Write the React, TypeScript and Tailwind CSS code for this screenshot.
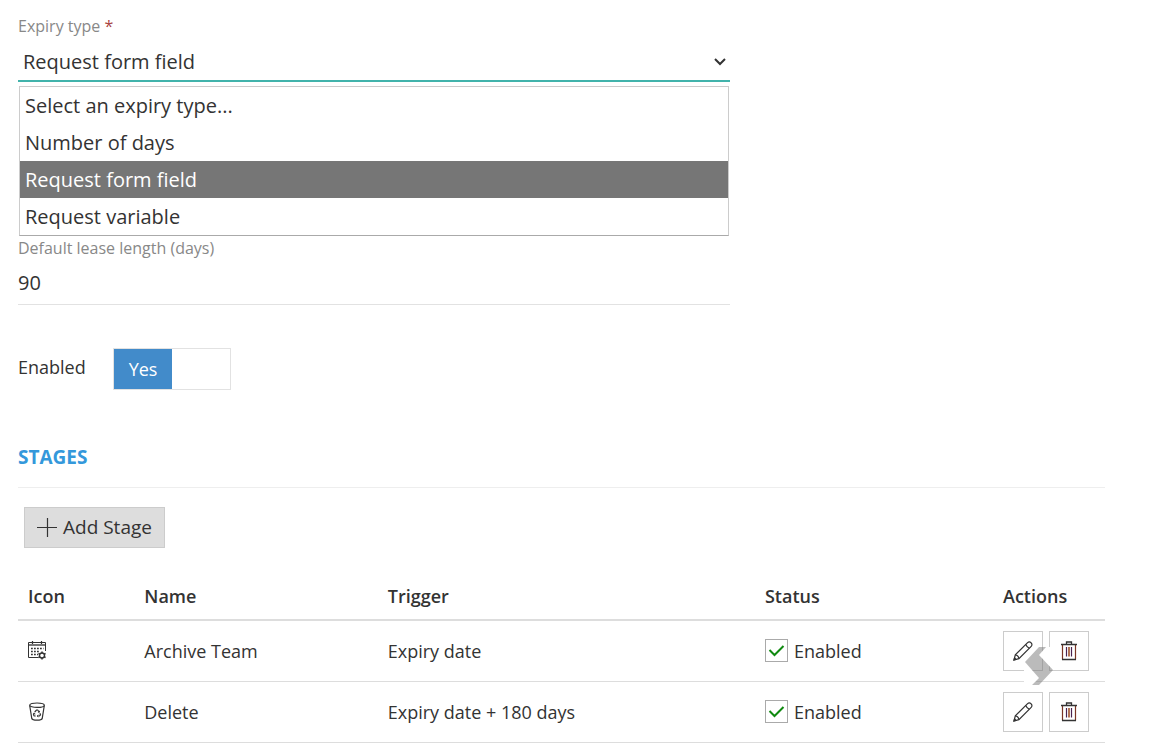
import React, { useState } from "react";

const expiryTypes = [
  "Select an expiry type...",
  "Number of days",
  "Request form field",
  "Request variable",
];

const stages = [
  { name: "Archive Team", trigger: "Expiry date", icon: "calendar" },
  { name: "Delete", trigger: "Expiry date + 180 days", icon: "bin" },
];

function CalendarGearIcon() {
  return (
    <svg width="20" height="20" viewBox="0 0 20 20" fill="none" stroke="#333" aria-hidden="true">
      <path d="M10.5 16.5H0.5V1.5H17.5V10" />
      <path d="M1 4H17" stroke="#777" strokeWidth="2" />
      <path d="M4.5 0V3M13.5 0V3" strokeWidth="1.2" />
      <path d="M3 7.5H15.5M3 10.5H12M3 13.5H10" strokeWidth="1.3" strokeDasharray="1.8 1.2" />
      <circle cx="14" cy="14.5" r="2.5" strokeWidth="1.4" />
      <path d="M14 10.5V12M14 17V18.5M10.4 12.5L11.8 13.2M16.2 15.8L17.6 16.5M10.4 16.5L11.8 15.8M16.2 13.2L17.6 12.5" strokeWidth="1.5" />
    </svg>
  );
}

function RecycleBinIcon() {
  return (
    <svg width="20" height="20" viewBox="0 0 20 20" fill="none" stroke="#333" aria-hidden="true">
      <ellipse cx="9" cy="3.2" rx="7.3" ry="2.2" strokeWidth="1.2" />
      <path d="M1.7 3.5L3.8 16.5C4.5 18.7 13.5 18.7 14.2 16.5L16.3 3.5" strokeWidth="1.2" />
      <path d="M6.7 10L8.5 8H9.7L11.1 10M11.9 11.2L12.5 12.8L11.5 14H9.5M7.7 14H6.2L5.5 12.7L6.3 11.3" strokeWidth="1.2" />
      <path d="M9.9 10.2H11.5V8.8M10.3 12.8L9.2 14L10.3 15.2M5.2 11.5L6.5 11.1L7 12.4" strokeWidth="0.9" />
    </svg>
  );
}

function PencilIcon() {
  return (
    <svg width="20" height="20" viewBox="0 0 20 20" fill="none" stroke="#333" strokeWidth="1.2" aria-hidden="true">
      <path d="M1 19L2.3 13.9L14.6 1.6C15.6 0.6 17 0.7 18 1.7C19.2 2.8 19.2 4.3 18.2 5.3L5.9 17.6Z" />
      <path d="M2.3 13.9C4.2 14.2 5.8 15.8 5.9 17.6M12.7 3.5C13.4 5.1 14.7 6.4 16.3 7.2" />
      <path d="M1 19L1.6 16.9L3.1 18.4Z" fill="#333" />
    </svg>
  );
}

function TrashIcon() {
  return (
    <svg width="20" height="20" viewBox="0 0 20 20" fill="none" aria-hidden="true">
      <path d="M3.5 4V18.5M16.5 18.5V4" stroke="#7a3524" strokeWidth="1.2" />
      <path d="M2 3.5H18M7.5 3V1H12.5V3M3 18.5H17" stroke="#333" strokeWidth="1.3" />
      <path d="M7.5 6V15.5" stroke="#4a2350" strokeWidth="1.2" />
      <path d="M10 6V15.5" stroke="#a0522d" strokeWidth="1.6" />
      <path d="M12.5 6V15.5" stroke="#4a2350" strokeWidth="1.2" />
    </svg>
  );
}

function RibbonMark() {
  return (
    <svg
      width="30"
      height="39"
      viewBox="0 0 30 39"
      className="pointer-events-none absolute top-[26px] left-[31px]"
      aria-hidden="true"
    >
      <path d="M22 0H30V23H29L15 8ZM0 15H1L15 31L8 39H0Z" fill="#fff" />
      <path d="M15 0H22L15 8L29 23L15 38H8L15 31L1 15Z" fill="#777" fillOpacity="0.5" />
    </svg>
  );
}

export default function App() {
  const [expiry, setExpiry] = useState("Request form field");
  const [open, setOpen] = useState(true);
  const [enabled, setEnabled] = useState(true);

  return (
    <main className="bg-white pt-3 pr-[62px] pb-3 pl-[18px] font-['Open_Sans','Noto_Sans',sans-serif] text-lg text-[#333]">
      <form className="max-w-[712px]" onSubmit={(e) => e.preventDefault()}>
        <div className="relative">
          <label htmlFor="expiry" className="block text-base leading-7 text-[#888]">
            Expiry type <span className="text-[#a94442]">*</span>
          </label>
          <div className="relative">
            <select
              id="expiry"
              value={expiry}
              onChange={(e) => setExpiry(e.target.value)}
              onClick={() => setOpen(!open)}
              className="block h-[42px] w-full appearance-none border-b-2 border-[#42b3ab] bg-transparent pt-1 pr-6 pl-[5px] text-xl outline-none"
            >
              {expiryTypes.map((type) => (
                <option key={type}>{type}</option>
              ))}
            </select>
            <svg width="12" height="8" viewBox="0 0 12 8" fill="none" className="pointer-events-none absolute top-[18px] right-1" aria-hidden="true">
              <path d="M1 1L6 6L11 1" stroke="#333" strokeWidth="2" />
            </svg>
          </div>
          {open && (
            <ul role="listbox" aria-label="Expiry type" className="absolute top-full right-px left-px z-10 mt-1 border border-[#ccc] border-b-[#aaa] bg-white text-xl">
              {expiryTypes.map((type) => (
                <li
                  key={type}
                  role="option"
                  aria-selected={type === expiry}
                  onClick={() => {
                    setExpiry(type);
                    setOpen(false);
                  }}
                  className="h-[37px] px-[5px] leading-[38px] aria-selected:bg-[#767676] aria-selected:text-white"
                >
                  {type}
                </li>
              ))}
            </ul>
          )}
        </div>

        <div className="mt-[152px]">
          <label htmlFor="lease" className="block text-base leading-7 text-[#888]">
            Default lease length (days)
          </label>
          <input
            id="lease"
            type="text"
            defaultValue="90"
            className="block h-[43px] w-full border-b border-[#e2e2e2] bg-transparent pb-0.5 text-xl outline-none"
          />
        </div>

        <div className="mt-[43px] flex items-center">
          <span id="enabled-label" className="w-[95px] pb-1">Enabled</span>
          <button
            type="button"
            role="switch"
            aria-checked={enabled}
            aria-labelledby="enabled-label"
            onClick={() => setEnabled(!enabled)}
            className="grid h-[42px] w-[118px] grid-cols-2 border border-[#e2e2e2] leading-10"
          >
            <span className={enabled ? "bg-[#428bca] text-white" : ""}>{enabled ? "Yes" : ""}</span>
            <span className={enabled ? "" : "bg-[#eee]"}>{enabled ? "" : "No"}</span>
          </button>
        </div>
      </form>

      <section className="mt-[51px]">
        <h2 className="border-b border-[#eee] pb-3.5 text-[19px] leading-8 font-bold text-[#3498db]">STAGES</h2>
        <button type="button" className="mt-[19px] ml-1.5 flex h-[41px] items-center gap-1.5 border border-[#ccc] bg-[#ddd] px-3 text-[19px]">
          <svg width="20" height="20" viewBox="0 0 20 20" fill="none" stroke="#333" aria-hidden="true">
            <path d="M0 9.5H20M10.5 0V19" strokeWidth="1.2" />
          </svg>
          Add Stage
        </button>

        <table className="mt-6 w-full table-fixed text-left">
          <colgroup>
            <col className="w-[10.7%]" />
            <col className="w-[22.4%]" />
            <col className="w-[34.7%]" />
            <col className="w-[21.9%]" />
            <col className="w-[10.3%]" />
          </colgroup>
          <thead>
            <tr className="h-12 border-b-2 border-[#ddd]">
              {["Icon", "Name", "Trigger", "Status", "Actions"].map((heading) => (
                <th key={heading} scope="col" className="px-2.5 font-semibold">
                  {heading}
                </th>
              ))}
            </tr>
          </thead>
          <tbody>
            {stages.map((stage, index) => (
              <tr key={stage.name} className="h-[61px] border-b border-[#ddd]">
                <td className="px-2.5">{stage.icon === "calendar" ? <CalendarGearIcon /> : <RecycleBinIcon />}</td>
                <td className="px-2.5">{stage.name}</td>
                <td className="px-2.5">{stage.trigger}</td>
                <td className="px-2.5">
                  <label className="flex items-center gap-1.5">
                    <span className="relative flex">
                      <input
                        type="checkbox"
                        defaultChecked
                        className="peer size-[23px] appearance-none border border-[#aaa] bg-white"
                      />
                      <svg viewBox="0 0 23 23" fill="none" className="pointer-events-none invisible absolute inset-0 peer-checked:visible" aria-hidden="true">
                        <path d="M4.5 11L9.5 16L18.5 7" stroke="#108a10" strokeWidth="2" />
                      </svg>
                    </span>
                    Enabled
                  </label>
                </td>
                <td className="relative px-2.5">
                  <div className="flex gap-1.5">
                    <button type="button" aria-label="Edit" className="flex size-10 items-center justify-center border border-[#ccc] bg-white">
                      <PencilIcon />
                    </button>
                    <button type="button" aria-label="Delete" className="flex size-10 items-center justify-center border border-[#ccc] bg-white">
                      <TrashIcon />
                    </button>
                  </div>
                  {index === 0 && <RibbonMark />}
                </td>
              </tr>
            ))}
          </tbody>
        </table>
      </section>
    </main>
  );
}
